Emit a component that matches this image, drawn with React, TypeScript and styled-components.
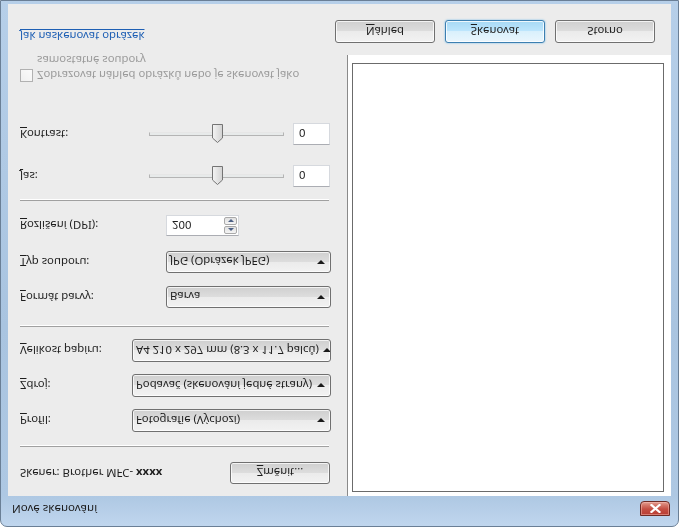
import React from "react";
import styled, { createGlobalStyle, css } from "styled-components";

const GlobalStyle = createGlobalStyle`
  html, body { margin: 0; padding: 0; background: #ffffff; overflow: hidden; }
  body { font-family: "Noto Sans", "Segoe UI", sans-serif; font-size: 11.3px; color: #1e1e1e; }
  * { box-sizing: border-box; }
`;

const Window = styled.div`
  width: 679px;
  height: 527px;
  transform: scaleY(-1);
  display: flex;
  flex-direction: column;
  border: 1px solid #6a7f96;
  border-radius: 7px 7px 0 0;
  padding: 0 7px 3px 7px;
  background: linear-gradient(#c0d6ee 0px, #aec8e3 30px, #a9c4e0 200px, #b6cfe9 527px);
`;

const TitleBar = styled.div`
  height: 30px;
  display: flex;
  align-items: flex-start;
  justify-content: space-between;
`;

const Title = styled.span`
  margin: 9px 0 0 4px;
  font-size: 11.5px;
  line-height: 16px;
  color: #1b1b1b;
`;

const CloseButton = styled.div`
  width: 30px;
  height: 15px;
  margin: 10px 1px 0 0;
  border: 1px solid #6e2a24;
  border-radius: 0 0 4px 4px;
  background: linear-gradient(#b93d33 0%, #c44e42 45%, #d4776a 75%, #e39f92 100%);
  display: flex;
  align-items: center;
  justify-content: center;
  box-shadow: inset 0 0 0 1px rgba(255, 200, 190, 0.45);
`;

const Body = styled.div`
  flex: 1;
  display: flex;
  flex-direction: column;
  background: #ececec;
`;

const Main = styled.div`
  height: 441px;
  display: flex;
`;

const LeftPanel = styled.div`
  width: 339px;
  display: flex;
  flex-direction: column;
  padding: 0 16px 0 12px;
`;

const RightPanel = styled.div`
  flex: 1;
  background: #ffffff;
  border-left: 1px solid #8a8a8a;
  padding: 4px 7px 8px 4px;
  display: flex;
`;

const Preview = styled.div`
  flex: 1;
  border: 1px solid #6b6b6b;
  background: #ffffff;
`;

const Row = styled.div<{ $top: number; $height: number }>`
  margin-top: ${(p) => p.$top}px;
  height: ${(p) => p.$height}px;
  display: flex;
  align-items: center;
  flex-shrink: 0;
`;

const Label = styled.span<{ $width?: number }>`
  ${(p) => (p.$width ? css`width: ${p.$width}px;` : css`flex: 1;`)}
  flex-shrink: 0;
  font-size: 11.3px;
  line-height: 16px;
  color: #1e1e1e;
  white-space: nowrap;
`;

const Key = styled.span`
  text-decoration: underline;
  text-underline-offset: 2px;
`;

const Separator = styled.div<{ $top: number }>`
  margin-top: ${(p) => p.$top}px;
  margin-right: 2px;
  height: 2px;
  border-top: 1px solid #a0a0a0;
  border-bottom: 1px solid #ffffff;
  flex-shrink: 0;
`;

const buttonFace = css`
  border: 1px solid #707070;
  border-radius: 3px;
  background: linear-gradient(#f2f2f2 0%, #ebebeb 50%, #dddddd 51%, #cfcfcf 100%);
  box-shadow: inset 0 0 0 1px rgba(255, 255, 255, 0.75);
`;

const Button = styled.div<{ $primary?: boolean; $width: number; $height: number }>`
  ${buttonFace}
  width: ${(p) => p.$width}px;
  height: ${(p) => p.$height}px;
  display: flex;
  align-items: center;
  justify-content: center;
  font-size: 11.3px;
  color: #1e1e1e;
  flex-shrink: 0;
  ${(p) =>
    p.$primary &&
    css`
      border-color: #3c7fb1;
      background: linear-gradient(#eaf6fd 0%, #d9f0fc 50%, #bee6fd 51%, #a7d9f5 100%);
      box-shadow: inset 0 0 0 1px rgba(255, 255, 255, 0.8), 0 0 2px #62b3e6;
    `}
`;

const Select = styled.div<{ $width: number }>`
  ${buttonFace}
  width: ${(p) => p.$width}px;
  height: 100%;
  display: flex;
  align-items: center;
  justify-content: space-between;
  padding: 0 5px 0 3px;
  font-size: 11.3px;
  color: #1e1e1e;
  white-space: nowrap;
  overflow: hidden;
`;

const Arrow = styled.span`
  width: 0;
  height: 0;
  border-left: 4px solid transparent;
  border-right: 4px solid transparent;
  border-top: 4px solid #1a1a1a;
  flex-shrink: 0;
  margin-left: 4px;
`;

const TextBox = styled.div<{ $width: number }>`
  width: ${(p) => p.$width}px;
  height: 100%;
  background: #ffffff;
  border: 1px solid #d6d9de;
  border-top-color: #abadb3;
  display: flex;
  align-items: center;
  padding-left: 5px;
  font-size: 11.3px;
  color: #1e1e1e;
  flex-shrink: 0;
`;

const SpinBox = styled(TextBox)`
  justify-content: space-between;
  padding-right: 1px;
`;

const SpinButtons = styled.div`
  width: 13px;
  height: 17px;
  display: flex;
  flex-direction: column;
  gap: 1px;
`;

const SpinHalf = styled.div<{ $up?: boolean }>`
  flex: 1;
  border: 1px solid #a9a9a9;
  border-radius: 2px;
  background: linear-gradient(#f4f4f4, #e1e1e1);
  display: flex;
  align-items: center;
  justify-content: center;
  &::after {
    content: "";
    width: 0;
    height: 0;
    border-left: 3px solid transparent;
    border-right: 3px solid transparent;
    ${(p) =>
      p.$up
        ? css`border-bottom: 3px solid #4d6185;`
        : css`border-top: 3px solid #4d6185;`}
  }
`;

const SliderGroup = styled.div`
  display: flex;
  align-items: center;
  height: 100%;
  gap: 9px;
`;

const Track = styled.div`
  position: relative;
  width: 135px;
  height: 4px;
  border: 1px solid #b4b4b4;
  border-bottom-color: #e6e6e6;
  background: #e7eaea;
`;

const Thumb = styled.svg`
  position: absolute;
  left: 62px;
  top: -8px;
`;

const CheckRow = styled.div<{ $top: number }>`
  margin-top: ${(p) => p.$top}px;
  display: flex;
  align-items: flex-start;
  gap: 4px;
  flex-shrink: 0;
`;

const CheckBox = styled.div`
  width: 13px;
  height: 13px;
  margin-top: 1px;
  border: 1px solid #b1b1b1;
  background: linear-gradient(135deg, #f0f0f0, #fbfbfb);
  flex-shrink: 0;
`;

const CheckText = styled.div`
  display: flex;
  flex-direction: column;
  font-size: 11.3px;
  line-height: 15px;
  color: #9b9b9b;
`;

const Bold = styled.b`
  font-weight: 700;
`;

const BottomBar = styled.div`
  flex: 1;
  display: flex;
  align-items: flex-start;
  justify-content: space-between;
  padding: 12px 16px 0 12px;
`;

const HelpLink = styled.span`
  margin-top: -1px;
  font-size: 11.3px;
  line-height: 16px;
  color: #1e5fb4;
  text-decoration: underline;
  text-underline-offset: 2px;
`;

const ButtonGroup = styled.div`
  display: flex;
  gap: 10px;
`;

const Slider: React.FC = () => (
  <Track>
    <Thumb width="11" height="19" viewBox="0 0 11 19">
      <defs>
        <linearGradient id="tg" x1="0" x2="1" y1="0" y2="0">
          <stop offset="0" stopColor="#f4f4f4" />
          <stop offset="1" stopColor="#d2d2d2" />
        </linearGradient>
      </defs>
      <path d="M0.5 5 L5.5 0.5 L10.5 5 L10.5 18.5 L0.5 18.5 Z" fill="url(#tg)" stroke="#747474" />
    </Thumb>
  </Track>
);

export default function App() {
  return (
    <>
      <GlobalStyle />
      <Window>
        <TitleBar>
          <Title>Nové skenování</Title>
          <CloseButton>
            <svg width="11" height="9" viewBox="0 0 11 9">
              <path d="M1.5 1 L9.5 8 M9.5 1 L1.5 8" stroke="#ffffff" strokeWidth="2.2" strokeLinecap="square" />
            </svg>
          </CloseButton>
        </TitleBar>
        <Body>
          <Main>
            <LeftPanel>
              <Row $top={12} $height={22}>
                <Label>
                  Skener: Brother MFC- <Bold>xxxx</Bold>
                </Label>
                <Button $width={100} $height={22} style={{ marginRight: 1 }}>
                  <span>
                    <Key>Z</Key>měnit...
                  </span>
                </Button>
              </Row>
              <Separator $top={15} />
              <Row $top={13} $height={23}>
                <Label $width={112}>
                  <Key>P</Key>rofil:
                </Label>
                <Select $width={199}>
                  <span>Fotografie (Výchozí)</span>
                  <Arrow />
                </Select>
              </Row>
              <Row $top={12} $height={23}>
                <Label $width={112}>
                  <Key>Z</Key>droj:
                </Label>
                <Select $width={199}>
                  <span>Podavač (skenování jedné strany)</span>
                  <Arrow />
                </Select>
              </Row>
              <Row $top={12} $height={23}>
                <Label $width={112}>
                  <Key>V</Key>elikost papíru:
                </Label>
                <Select $width={199}>
                  <span>A4 210 x 297 mm (8.3 x 11.7 palců)</span>
                  <Arrow />
                </Select>
              </Row>
              <Separator $top={12} />
              <Row $top={17} $height={22}>
                <Label $width={146}>
                  <Key>F</Key>ormát barvy:
                </Label>
                <Select $width={165}>
                  <span>Barva</span>
                  <Arrow />
                </Select>
              </Row>
              <Row $top={13} $height={22}>
                <Label $width={146}>
                  <Key>T</Key>yp souboru:
                </Label>
                <Select $width={165}>
                  <span>JPG (Obrázek JPEG)</span>
                  <Arrow />
                </Select>
              </Row>
              <Row $top={15} $height={21}>
                <Label $width={146}>
                  <Key>R</Key>ozlišení (DPI):
                </Label>
                <SpinBox $width={73}>
                  <span>200</span>
                  <SpinButtons>
                    <SpinHalf $up />
                    <SpinHalf />
                  </SpinButtons>
                </SpinBox>
              </Row>
              <Separator $top={14} />
              <Row $top={12} $height={22}>
                <Label $width={129}>
                  <Key>J</Key>as:
                </Label>
                <SliderGroup>
                  <Slider />
                  <TextBox $width={37}>0</TextBox>
                </SliderGroup>
              </Row>
              <Row $top={20} $height={22}>
                <Label $width={129}>
                  <Key>K</Key>ontrast:
                </Label>
                <SliderGroup>
                  <Slider />
                  <TextBox $width={37}>0</TextBox>
                </SliderGroup>
              </Row>
              <CheckRow $top={40}>
                <CheckBox />
                <CheckText>
                  <span>Zobrazovat náhled obrázků nebo je skenovat jako</span>
                  <span>samostatné soubory</span>
                </CheckText>
              </CheckRow>
            </LeftPanel>
            <RightPanel>
              <Preview />
            </RightPanel>
          </Main>
          <BottomBar>
            <HelpLink>Jak naskenovat obrázek</HelpLink>
            <ButtonGroup>
              <Button $width={100} $height={23}>
                <span>
                  <Key>N</Key>áhled
                </span>
              </Button>
              <Button $width={100} $height={23} $primary>
                <span>
                  <Key>S</Key>kenovat
                </span>
              </Button>
              <Button $width={100} $height={23}>
                Storno
              </Button>
            </ButtonGroup>
          </BottomBar>
        </Body>
      </Window>
    </>
  );
}
